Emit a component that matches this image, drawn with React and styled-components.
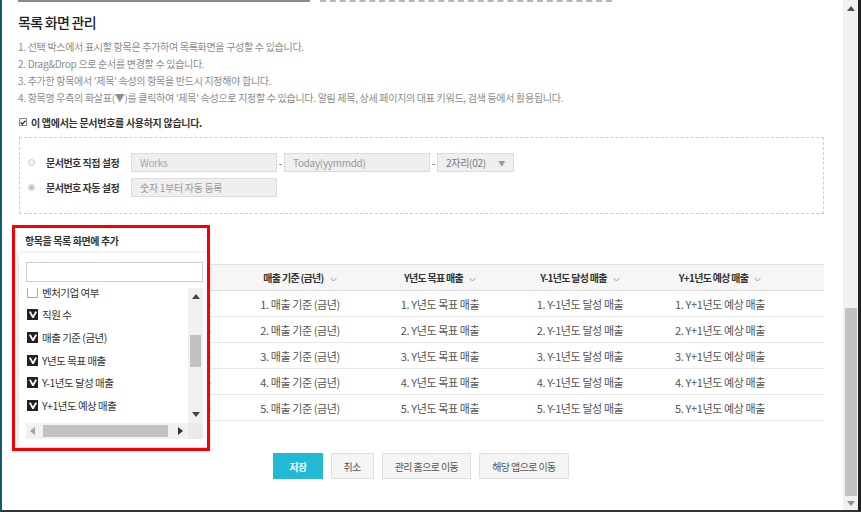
import React from 'react';
import styled, { createGlobalStyle } from 'styled-components';

const GlobalStyle = createGlobalStyle`
  html, body {
    margin: 0;
    padding: 0;
    background: #fff;
  }
  body {
    font-family: "Noto Sans CJK KR", "Noto Sans", sans-serif;
    color: #333;
  }
  * { box-sizing: border-box; }
`;

const Frame = styled.div`
  width: 861px;
  height: 512px;
  display: flex;
  border-left: 2px solid #17596d;
  border-right: 3px solid #222;
  border-bottom: 2px solid #333;
  overflow: hidden;
  background: #fff;
`;

const Main = styled.div`
  flex: 1;
  min-width: 0;
  position: relative;
  padding: 0 19px 0 16px;
`;

const TopStrip = styled.div`
  display: flex;
  gap: 10px;
  height: 2px;
`;

const TopLine = styled.div`
  width: 292px;
  border-top: 2px ${(p) => (p.$dashed ? 'dashed #b5b5b5' : 'solid #8a8a8a')};
`;

const Title = styled.h2`
  margin: 10px 0 0;
  font-size: 14px;
  line-height: 20px;
  font-weight: 500;
  letter-spacing: -0.7px;
  color: #222;
`;

const Guide = styled.ol`
  list-style: none;
  margin: 6px 0 0;
  padding: 0;
`;

const GuideLine = styled.li`
  font-size: 10px;
  line-height: 17px;
  letter-spacing: -0.3px;
  color: #8c8c8c;
  white-space: nowrap;
`;

const CheckRow = styled.label`
  display: flex;
  align-items: center;
  gap: 4px;
  height: 16px;
  margin-top: 8px;
  padding-left: 1px;
  font-size: 10px;
  font-weight: 700;
  letter-spacing: -0.3px;
  color: #333;
`;

const SmallCheck = styled.span`
  width: 8px;
  height: 8px;
  border: 1px solid #8a8a8a;
  background: #fff;
  display: flex;
  align-items: center;
  justify-content: center;
`;

const DashedBox = styled.div`
  margin-top: 7px;
  margin-left: 1px;
  border: 1px dashed #cfcfcf;
  padding: 15px 0 16px 8px;
  display: flex;
  flex-direction: column;
  gap: 6px;
`;

const NumRow = styled.div`
  display: flex;
  align-items: center;
  height: 19px;
`;

const Radio = styled.span`
  width: 7px;
  height: 7px;
  border-radius: 50%;
  border: 1px solid #cfcfcf;
  background: ${(p) => (p.$on ? '#b0b0b0' : '#f2f2f2')};
  box-shadow: ${(p) => (p.$on ? 'inset 0 0 0 1px #eee' : 'none')};
  margin-right: 11px;
`;

const NumLabel = styled.span`
  width: 85px;
  font-size: 10px;
  font-weight: 700;
  letter-spacing: -0.5px;
  color: #333;
`;

const Field = styled.div`
  width: ${(p) => p.$w}px;
  height: 19px;
  background: #efefef;
  border: 1px solid #dcdcdc;
  display: flex;
  align-items: center;
  justify-content: space-between;
  padding: 0 8px;
  font-size: 10px;
  letter-spacing: -0.3px;
  color: ${(p) => p.$color || '#a6a6a6'};
`;

const Dash = styled.span`
  width: 7px;
  text-align: center;
  font-size: 10px;
  color: #555;
`;

const Caret = styled.span`
  font-size: 7px;
  color: #999;
`;

const SectionLabel = styled.div`
  margin-top: 20px;
  padding-left: 7px;
  height: 14px;
  line-height: 14px;
  font-size: 10px;
  font-weight: 700;
  letter-spacing: -0.4px;
  color: #333;
`;

const Table = styled.table`
  margin-top: 16px;
  width: 806px;
  border-collapse: collapse;
  table-layout: fixed;
`;

const Th = styled.th`
  height: 26px;
  padding: 0;
  background: #f6f6f6;
  border-top: 1px solid #e2e2e2;
  border-bottom: 1px solid #dcdcdc;
  font-size: 10px;
  font-weight: 700;
  letter-spacing: -0.7px;
  color: #333;
  text-align: center;
  white-space: nowrap;
`;

const Td = styled.td`
  height: 26px;
  padding: 0;
  border-bottom: 1px solid #e6e6e6;
  font-size: 11px;
  letter-spacing: -0.4px;
  color: #555;
  text-align: center;
  white-space: nowrap;
`;

const HeadChevron = styled.svg`
  margin-left: 6px;
  vertical-align: middle;
`;

const Buttons = styled.div`
  margin-top: 32px;
  display: flex;
  justify-content: center;
  gap: 8px;
`;

const Button = styled.button`
  height: 26px;
  padding: 0 ${(p) => (p.$primary ? 15 : 12)}px;
  border: 1px solid ${(p) => (p.$primary ? '#21b9d4' : '#dedede')};
  background: ${(p) => (p.$primary ? '#21b9d4' : '#f5f5f5')};
  color: ${(p) => (p.$primary ? '#fff' : '#555')};
  font-family: inherit;
  font-size: 10px;
  font-weight: ${(p) => (p.$primary ? 700 : 400)};
  letter-spacing: -0.6px;
  cursor: pointer;
`;

/* open dropdown that lies over the table */
const Dropdown = styled.div`
  position: absolute;
  left: 17px;
  top: 253px;
  width: 190px;
  height: 194px;
  background: #fff;
  box-shadow: 0 1px 4px rgba(0, 0, 0, 0.22);
  padding: 9px 7px 0 7px;
`;

const Search = styled.div`
  width: 177px;
  height: 20px;
  border: 1px solid #cdcdcd;
  background: #fff;
`;

const ListBox = styled.div`
  margin-top: 6px;
  width: 177px;
  display: grid;
  grid-template-columns: 162px 15px;
  grid-template-rows: 135px 16px;
`;

const ListView = styled.div`
  overflow: hidden;
`;

const ListInner = styled.div`
  margin-top: -7px;
`;

const Item = styled.div`
  display: flex;
  align-items: center;
  gap: 4px;
  height: 22.6px;
  padding-left: 1px;
  font-size: 10.5px;
  letter-spacing: -0.5px;
  color: #333;
  white-space: nowrap;
`;

const Box = styled.span`
  width: 11px;
  height: 11px;
  flex: none;
  display: flex;
  align-items: center;
  justify-content: center;
  background: ${(p) => (p.$on ? '#222' : '#fff')};
  border: 1px solid ${(p) => (p.$on ? '#222' : '#aaa')};
`;

const VBar = styled.div`
  background: #f1f1f1;
  display: flex;
  flex-direction: column;
  align-items: center;
`;

const HBar = styled.div`
  background: #f1f1f1;
  display: flex;
  align-items: center;
`;

const Corner = styled.div`
  background: #e9e9e9;
`;

const ArrowCell = styled.div`
  width: ${(p) => p.$w || 15}px;
  height: ${(p) => p.$h || 17}px;
  flex: none;
  display: flex;
  align-items: center;
  justify-content: center;
`;

const VThumb = styled.div`
  width: 11px;
  height: 32px;
  margin-top: 30px;
  background: #c1c1c1;
`;

const HThumb = styled.div`
  width: 125px;
  height: 12px;
  margin-left: 4px;
  background: #c1c1c1;
`;

const HSpacer = styled.div`
  flex: 1;
`;

const Highlight = styled.div`
  position: absolute;
  left: 10px;
  top: 225px;
  width: 198px;
  height: 226px;
  border: 3px solid #f80000;
  pointer-events: none;
`;

/* page scrollbar */
const PageBar = styled.div`
  width: 15px;
  flex: none;
  background: #f1f1f1;
  display: flex;
  flex-direction: column;
  align-items: center;
`;

const PageTrack = styled.div`
  flex: 1;
  display: flex;
  flex-direction: column;
  justify-content: flex-end;
`;

const PageThumb = styled.div`
  width: 12px;
  height: 188px;
  background: #c1c1c1;
`;

const Tri = ({ dir, color = '#555' }) => {
  const pts = {
    up: '0,5 4,0 8,5',
    down: '0,0 8,0 4,5',
    left: '5,0 5,8 0,4',
    right: '0,0 0,8 5,4',
  }[dir];
  const vertical = dir === 'up' || dir === 'down';
  return (
    <svg width={vertical ? 8 : 5} height={vertical ? 5 : 8} viewBox={vertical ? '0 0 8 5' : '0 0 5 8'}>
      <polygon points={pts} fill={color} />
    </svg>
  );
};

const Chevron = () => (
  <HeadChevron width="7" height="5" viewBox="0 0 7 5">
    <polyline points="0.5,1 3.5,4 6.5,1" fill="none" stroke="#9a9a9a" strokeWidth="1" />
  </HeadChevron>
);

const VMark = () => (
  <svg width="8" height="7" viewBox="0 0 8 7">
    <path d="M0.8 0.6 L4 6.4 L7.2 0.6" fill="none" stroke="#fff" strokeWidth="1.9" strokeLinejoin="round" />
  </svg>
);

const guides = [
  '1. 선택 박스에서 표시할 항목은 추가하여 목록화면을 구성할 수 있습니다.',
  '2. Drag&Drop 으로 순서를 변경할 수 있습니다.',
  "3. 추가한 항목에서 '제목' 속성의 항목을 반드시 지정해야 합니다.",
  "4. 항목명 우측의 화살표(▼)를 클릭하여 '제목' 속성으로 지정할 수 있습니다. 알림 제목, 상세 페이지의 대표 키워드, 검색 등에서 활용됩니다.",
];

const columns = [
  { key: 'name', title: '회사명', width: 132 },
  { key: 'staff', title: '직원 수', width: 80 },
  { key: 'sales', title: '매출 기준 (금년)', width: 140 },
  { key: 'goal', title: 'Y년도 목표 매출', width: 140 },
  { key: 'prev', title: 'Y-1년도 달성 매출', width: 140 },
  { key: 'next', title: 'Y+1년도 예상 매출', width: 140 },
];

const items = [
  { label: '벤처기업 여부', on: false },
  { label: '직원 수', on: true },
  { label: '매출 기준 (금년)', on: true },
  { label: 'Y년도 목표 매출', on: true },
  { label: 'Y-1년도 달성 매출', on: true },
  { label: 'Y+1년도 예상 매출', on: true },
];

export default function App() {
  return (
    <>
      <GlobalStyle />
      <Frame>
        <Main>
          <TopStrip>
            <TopLine />
            <TopLine $dashed />
          </TopStrip>
          <Title>목록 화면 관리</Title>
          <Guide>
            {guides.map((g) => (
              <GuideLine key={g}>{g}</GuideLine>
            ))}
          </Guide>

          <CheckRow>
            <SmallCheck>
              <svg width="6" height="5" viewBox="0 0 6 5">
                <polyline points="0.5,2.5 2.3,4.2 5.5,0.6" fill="none" stroke="#333" strokeWidth="1.4" />
              </svg>
            </SmallCheck>
            이 앱에서는 문서번호를 사용하지 않습니다.
          </CheckRow>

          <DashedBox>
            <NumRow>
              <Radio />
              <NumLabel>문서번호 직접 설정</NumLabel>
              <Field $w={146}>Works</Field>
              <Dash>-</Dash>
              <Field $w={146} $color="#999">Today(yymmdd)</Field>
              <Dash>-</Dash>
              <Field $w={77} $color="#777">
                2자리(02)
                <Caret>▼</Caret>
              </Field>
            </NumRow>
            <NumRow>
              <Radio $on />
              <NumLabel>문서번호 자동 설정</NumLabel>
              <Field $w={146} $color="#9a9a9a">숫자 1부터 자동 등록</Field>
            </NumRow>
          </DashedBox>

          <SectionLabel>항목을 목록 화면에 추가</SectionLabel>

          <Table>
            <colgroup>
              {columns.map((c) => (
                <col key={c.key} style={{ width: c.width }} />
              ))}
              <col style={{ width: 34 }} />
            </colgroup>
            <thead>
              <tr>
                {columns.map((c) => (
                  <Th key={c.key}>
                    {c.title}
                    <Chevron />
                  </Th>
                ))}
                <Th />
              </tr>
            </thead>
            <tbody>
              {[1, 2, 3, 4, 5].map((n) => (
                <tr key={n}>
                  {columns.map((c) => (
                    <Td key={c.key}>
                      {n}. {c.title}
                    </Td>
                  ))}
                  <Td />
                </tr>
              ))}
            </tbody>
          </Table>

          <Buttons>
            <Button $primary>저장</Button>
            <Button>취소</Button>
            <Button>관리 홈으로 이동</Button>
            <Button>해당 앱으로 이동</Button>
          </Buttons>

          <Dropdown>
            <Search />
            <ListBox>
              <ListView>
                <ListInner>
                  {items.map((it) => (
                    <Item key={it.label}>
                      <Box $on={it.on}>{it.on && <VMark />}</Box>
                      {it.label}
                    </Item>
                  ))}
                </ListInner>
              </ListView>
              <VBar>
                <ArrowCell>
                  <Tri dir="up" color="#444" />
                </ArrowCell>
                <VThumb />
                <HSpacer />
                <ArrowCell>
                  <Tri dir="down" color="#444" />
                </ArrowCell>
              </VBar>
              <HBar>
                <ArrowCell $w={13} $h={16}>
                  <Tri dir="left" color="#a0a0a0" />
                </ArrowCell>
                <HThumb />
                <HSpacer />
                <ArrowCell $w={16} $h={16}>
                  <Tri dir="right" color="#333" />
                </ArrowCell>
              </HBar>
              <Corner />
            </ListBox>
          </Dropdown>

          <Highlight />
        </Main>

        <PageBar>
          <ArrowCell $h={16}>
            <Tri dir="up" color="#505050" />
          </ArrowCell>
          <PageTrack>
            <PageThumb />
          </PageTrack>
          <ArrowCell $h={14}>
            <Tri dir="down" color="#909090" />
          </ArrowCell>
        </PageBar>
      </Frame>
    </>
  );
}
